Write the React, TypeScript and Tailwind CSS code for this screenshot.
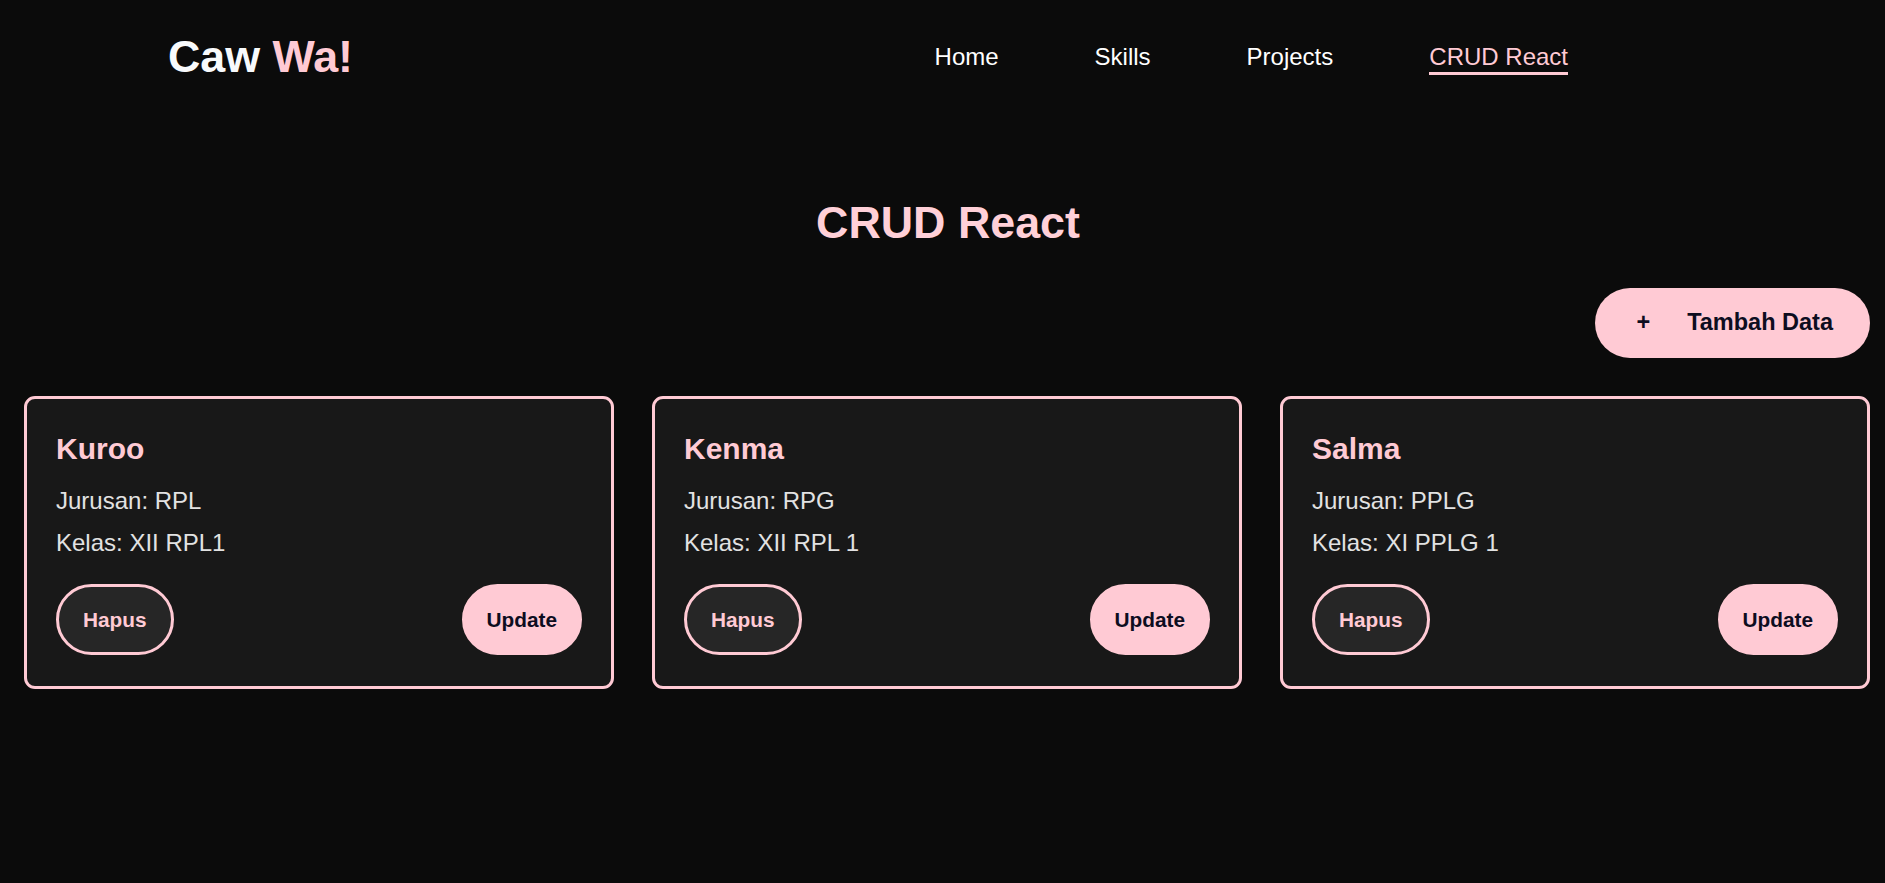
import React from 'react';

interface Siswa {
  id: number;
  nama: string;
  jurusan: string;
  kelas: string;
}

const dataSiswa: Siswa[] = [
  { id: 1, nama: 'Kuroo', jurusan: 'RPL', kelas: 'XII RPL1' },
  { id: 2, nama: 'Kenma', jurusan: 'RPG', kelas: 'XII RPL 1' },
  { id: 3, nama: 'Salma', jurusan: 'PPLG', kelas: 'XI PPLG 1' },
];

const navLinks = ['Home', 'Skills', 'Projects', 'CRUD React'];

const App = () => {
  return <div className="min-h-[883px] bg-[#0b0b0b] font-['Liberation_Sans',Arial,sans-serif] text-white">
      {/* Navbar */}
      <header className="flex items-center justify-between pl-[168px] pr-[317px] py-[30px]">
        <div className="text-[44.8px] leading-[1.2] font-bold">
          <span className="text-[#f8fafc]">Caw </span>
          <span className="text-[#ffcad4]">Wa!</span>
        </div>
        <nav className="flex items-center gap-[96px] pt-[2px]">
          {navLinks.map(link => <a key={link} href="#" className={`text-[24px] leading-[1.2] border-b-[3px] pt-[3px] ${link === 'CRUD React' ? 'text-[#ffcad4] border-[#ffcad4]' : 'text-white border-transparent'}`}>
                {link}
              </a>)}
        </nav>
      </header>

      <main className="pl-6 pr-[15px]">
        <h1 className="mt-[82px] text-center text-[44.8px] leading-[1.2] font-bold text-[#ffd0d8] pl-[2px]">
          CRUD React
        </h1>

        <div className="mt-[38px] flex justify-end">
          <button className="flex h-[70px] items-center rounded-full bg-[#ffcad4] pl-[41px] pr-[37px] text-[23.5px] font-bold text-[#0d0d1f]">
            <span className="mr-[37px]">+</span>
            <span>Tambah Data</span>
          </button>
        </div>

        <div className="mt-[38px] grid grid-cols-3 gap-[38px]">
          {dataSiswa.map(siswa => <div key={siswa.id} className="rounded-[11px] border-[3px] border-[#ffcad4] bg-[#181818] pt-[32px] pb-[31px] px-[29px]">
                <h3 className="mb-[20px] text-[30px] leading-[1.2] font-bold text-[#ffcad4]">
                  {siswa.nama}
                </h3>
                <p className="mb-[14px] text-[24px] leading-[1.2] text-[#e2e2e2]">
                  Jurusan: {siswa.jurusan}
                </p>
                <p className="text-[24px] leading-[1.2] text-[#e2e2e2]">
                  Kelas: {siswa.kelas}
                </p>
                <div className="mt-[26px] flex items-center justify-between">
                  <button className="h-[71px] rounded-full border-[3px] border-[#ffcad4] bg-[#262626] px-[24px] text-[20.8px] font-bold text-[#ffcad4]">
                    Hapus
                  </button>
                  <button className="h-[71px] rounded-full border-[3px] border-[#ffcad4] bg-[#ffcad4] px-[22px] text-[20.8px] font-bold text-[#0d0d1f]">
                    Update
                  </button>
                </div>
              </div>)}
        </div>
      </main>
    </div>;
};

export default App;
